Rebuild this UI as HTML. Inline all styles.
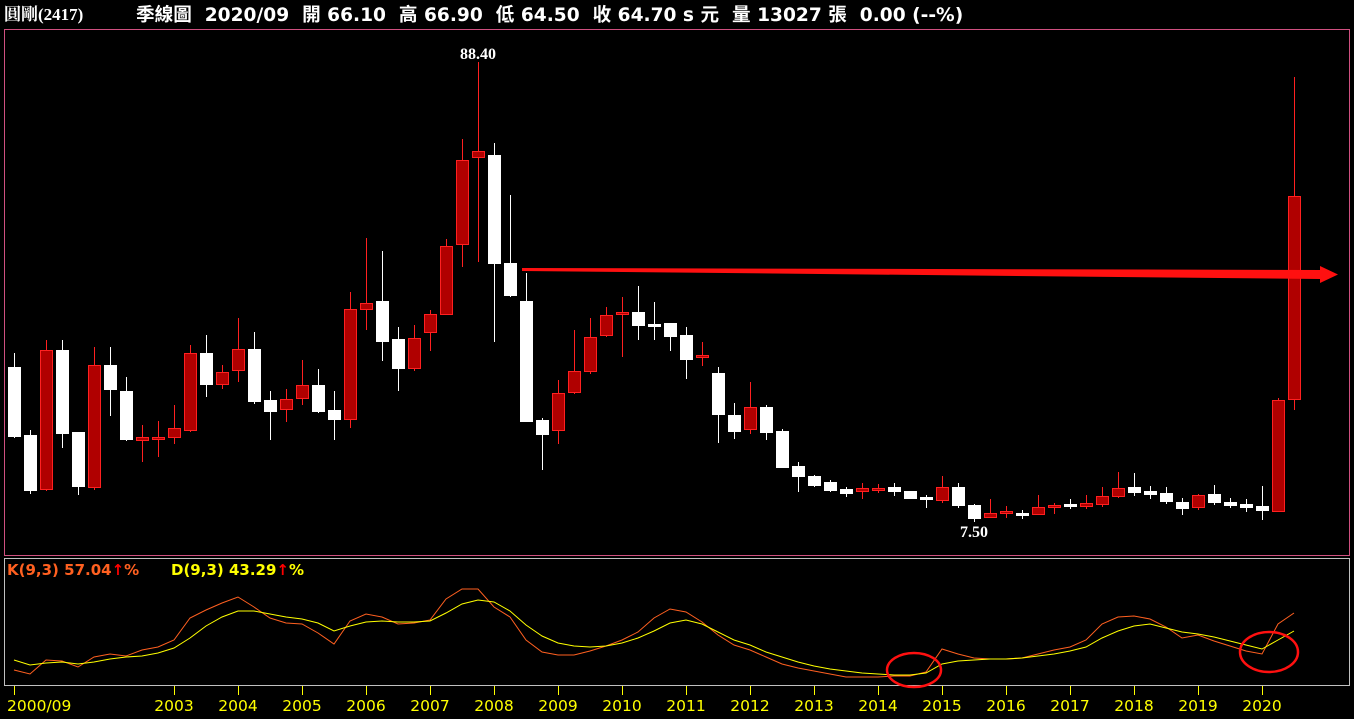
<!DOCTYPE html>
<html><head><meta charset="utf-8"><style>
html,body{margin:0;padding:0;background:#000;width:1354px;height:719px;overflow:hidden}
svg{display:block}
.hd{font-family:"DejaVu Sans","Noto Sans CJK TC",sans-serif;font-weight:bold;font-size:18.6px;fill:#fff}
.yr{font-family:"DejaVu Sans",sans-serif;font-size:15.5px;fill:#ffff00}
</style></head><body>
<svg id="s" width="1354" height="719" xmlns="http://www.w3.org/2000/svg">
<text x="4" y="20" class="hd" style="font-family:'Liberation Serif','Noto Serif CJK SC',serif;font-size:17px;font-weight:bold">圓剛(2417)</text>
<text x="136" y="21" class="hd">季線圖 &#160;2020/09 &#160;開 66.10 &#160;高 66.90 &#160;低 64.50 &#160;收 64.70 s 元 &#160;量 13027 張 &#160;0.00 (--%)</text>
<rect x="4.5" y="29.5" width="1345" height="526" fill="none" stroke="#d05080"/>
<rect x="4.5" y="558.5" width="1345" height="127" fill="none" stroke="#c0c0c0"/>
<text x="478" y="59" text-anchor="middle" font-family="Liberation Serif,serif" font-weight="bold" font-size="16" fill="#fff">88.40</text>
<text x="974" y="537" text-anchor="middle" font-family="Liberation Serif,serif" font-weight="bold" font-size="16" fill="#fff">7.50</text>
<text x="7" y="575" font-family="DejaVu Sans,sans-serif" font-weight="bold" font-size="15" fill="#ff6020">K(9,3) 57.04<tspan fill="#ff0000">↑</tspan>%</text>
<text x="171" y="575" font-family="DejaVu Sans,sans-serif" font-weight="bold" font-size="15" fill="#ffff00">D(9,3) 43.29<tspan fill="#ff0000">↑</tspan>%</text>
<g id="c"></g>
<polygon points="522,268 1320,270 1320,266 1338,274.5 1320,283 1320,279 522,271" fill="#ff1010"/>
<polyline fill="none" stroke="#ff6020" stroke-width="1" points="14,670 30,674 46,660 62,661 78,667 94,657 110,654 126,656 142,650 158,647 174,640 190,618 206,610 222,603 238,597 254,607 270,618 286,623 302,624 318,633 334,644 350,621 366,614 382,617 398,624 414,623 430,620 446,599 462,589 478,589 494,607 510,617 526,640 542,652 558,655 574,655 590,651 606,646 622,640 638,632 654,618 670,609 686,612 702,622 718,635 734,645 750,650 766,657 782,664 798,668 814,671 830,674 846,677 862,677 878,677 894,676 910,676 926,672 942,649 958,654 974,658 990,659 1006,659 1022,658 1038,654 1054,650 1070,647 1086,640 1102,624 1118,617 1134,616 1150,619 1166,627 1182,638 1198,635 1214,641 1230,646 1246,651 1262,654 1278,624 1294,613"/>
<polyline fill="none" stroke="#ffff00" stroke-width="1" points="14,660 30,665 46,663 62,662 78,664 94,662 110,659 126,657 142,656 158,653 174,648 190,638 206,626 222,617 238,611 254,611 270,614 286,617 302,619 318,623 334,631 350,626 366,622 382,621 398,622 414,622 430,621 446,613 462,604 478,600 494,602 510,611 526,625 542,636 558,643 574,646 590,647 606,646 622,643 638,638 654,631 670,623 686,620 702,624 718,632 734,640 750,645 766,652 782,657 798,662 814,666 830,669 846,671 862,673 878,674 894,675 910,675 926,673 942,664 958,661 974,660 990,659 1006,659 1022,658 1038,656 1054,654 1070,651 1086,647 1102,638 1118,631 1134,626 1150,624 1166,628 1182,632 1198,634 1214,637 1230,641 1246,645 1262,649 1278,640 1294,631"/>
<ellipse cx="914" cy="670" rx="27" ry="17" fill="none" stroke="#ff1010" stroke-width="2.5"/>
<ellipse cx="1269" cy="652" rx="29" ry="20" fill="none" stroke="#ff1010" stroke-width="2.5"/>
<g id="t"></g>
</svg>
<script>
var d=[[0,367,436,353,438],[0,435,490,430,494],[1,350,489,340,491],[0,350,433,340,448],[0,432,486,432,495],[1,365,487,347,490],[0,365,389,347,416],[0,391,439,377,441],[1,437,440,425,462],[1,437,439,421,457],[1,428,437,405,444],[1,353,430,345,432],[0,353,384,335,397],[1,372,384,365,389],[1,349,370,318,382],[0,349,401,332,404],[0,400,411,391,440],[1,399,409,389,422],[1,385,398,360,405],[0,385,411,369,413],[0,410,419,391,440],[1,309,419,292,428],[1,303,309,238,330],[0,301,341,251,361],[0,339,368,327,391],[1,338,368,325,371],[1,314,332,310,351],[1,246,314,239,315],[1,160,244,139,267],[1,151,157,62,262],[0,155,263,143,342],[0,263,295,195,297],[0,301,421,273,422],[0,420,434,418,470],[1,393,430,380,444],[1,371,392,330,394],[1,337,371,318,374],[1,315,335,307,337],[1,312,314,297,357],[0,312,325,286,340],[0,324,326,302,340],[0,323,336,323,351],[0,335,359,327,379],[1,355,357,342,366],[0,373,414,367,443],[0,415,431,403,439],[1,407,429,382,434],[0,407,432,405,440],[0,431,467,429,467],[0,466,476,462,492],[0,476,485,475,487],[0,482,490,480,492],[0,489,493,487,497],[1,488,491,483,499],[1,488,490,484,493],[0,487,491,483,496],[0,491,498,491,499],[0,497,499,495,508],[1,487,500,476,503],[0,487,505,483,508],[0,505,518,504,522],[1,513,517,499,518],[1,511,513,506,518],[0,513,515,510,519],[1,507,514,495,515],[1,505,507,503,514],[0,504,506,499,509],[1,503,506,495,509],[1,496,504,487,507],[1,488,496,472,498],[0,487,492,473,496],[0,491,494,486,499],[0,493,501,487,504],[0,502,508,498,515],[1,495,507,494,510],[0,494,502,485,505],[0,502,505,498,508],[0,504,507,499,512],[0,506,510,486,520],[1,400,511,398,512],[1,196,399,77,410]];
var h='';d.forEach(function(c,i){var x=14+16*i,col=c[0]?'#ff2020':'#ffffff',f=c[0]?'#b00000':'#ffffff';
h+='<line x1="'+(x+.5)+'" x2="'+(x+.5)+'" y1="'+c[3]+'" y2="'+c[4]+'" stroke="'+col+'"/>';
var hh=Math.max(c[2]-c[1],1);h+='<rect x="'+(x-6+.5)+'" y="'+(c[1]+.5)+'" width="12" height="'+hh+'" fill="'+f+'" stroke="'+col+'"/>';});
document.getElementById('c').innerHTML=h;
var y=[['2000/09',14],['2003',174],['2004',238],['2005',302],['2006',366],['2007',430],['2008',494],['2009',558],['2010',622],['2011',686],['2012',750],['2013',814],['2014',878],['2015',942],['2016',1006],['2017',1070],['2018',1134],['2019',1198],['2020',1262]];
var t='';y.forEach(function(a,i){t+='<line x1="'+(a[1]+.5)+'" x2="'+(a[1]+.5)+'" y1="686" y2="695" stroke="#ffff00"/>';
t+='<text class="yr" x="'+(i?a[1]:7)+'" y="711" text-anchor="'+(i?'middle':'start')+'">'+a[0]+'</text>';});
document.getElementById('t').innerHTML=t;
</script>
</body></html>
